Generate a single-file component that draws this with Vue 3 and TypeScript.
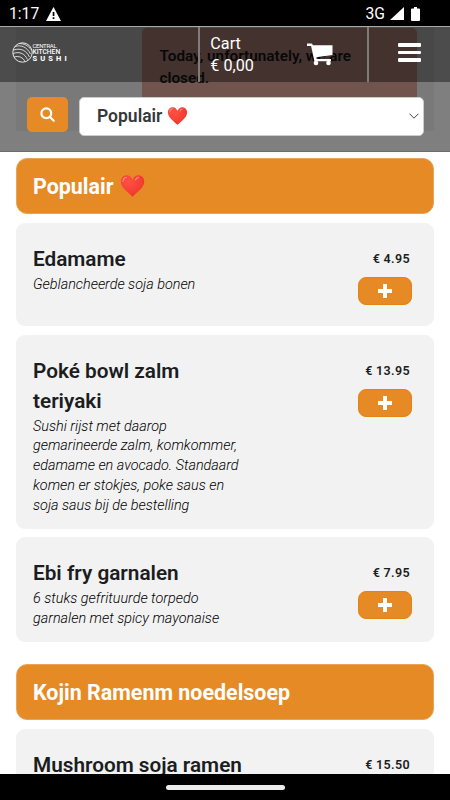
<script setup lang="ts">
interface Dish {
  name: string
  description: string[]
  price: string
}

interface Category {
  title: string
  favourite: boolean
  dishes: Dish[]
}

const categories: Category[] = [
  {
    title: 'Populair',
    favourite: true,
    dishes: [
      { name: 'Edamame', description: ['Geblancheerde soja bonen'], price: '€ 4.95' },
      {
        name: 'Poké bowl zalm teriyaki',
        description: [
          'Sushi rijst met daarop',
          'gemarineerde zalm, komkommer,',
          'edamame en avocado. Standaard',
          'komen er stokjes, poke saus en',
          'soja saus bij de bestelling',
        ],
        price: '€ 13.95',
      },
      {
        name: 'Ebi fry garnalen',
        description: ['6 stuks gefrituurde torpedo', 'garnalen met spicy mayonaise'],
        price: '€ 7.95',
      },
    ],
  },
  {
    title: 'Kojin Ramenm noedelsoep',
    favourite: false,
    dishes: [{ name: 'Mushroom soja ramen', description: [], price: '€ 15.50' }],
  },
]
</script>

<template>
  <div class="phone">
    <svg class="defs" width="0" height="0" aria-hidden="true">
      <defs>
        <radialGradient id="heart-fill" cx=".35" cy=".3" r=".85">
          <stop offset="0" stop-color="#ff5145" />
          <stop offset=".65" stop-color="#f53d32" />
          <stop offset="1" stop-color="#d9281f" />
        </radialGradient>
        <symbol id="heart" viewBox="0 0 24 22">
          <path d="M12 4.6C10.4 1.500 8.500.300 6.300.300 2.800.300.300 3 .300 6.600c0 6 6.600 10.400 11.700 15.100 5.100-4.700 11.700-9.100 11.700-15.100C23.700 3 21.200.300 17.700.300 15.500.300 13.600 1.500 12 4.600z" fill="url(#heart-fill)" />
          <path d="M2.500 6.200C2.700 4 4 2.500 5.900 2.300M15 4.800c.7-1.300 1.700-2.200 3-2.300" fill="none" stroke="#ff8a7c" stroke-width="1.300" stroke-linecap="round" />
        </symbol>
      </defs>
    </svg>

    <div class="status-bar">
      <span class="clock">1:17</span>
      <svg class="warning" width="15" height="14" viewBox="0 0 15 14">
        <path d="M7.500 0L15 14H0z" fill="#fff" />
        <path d="M6.700 5h1.700v4H6.700zM6.700 10.200h1.700v1.700H6.700z" fill="#000" />
      </svg>
      <span class="network">3G</span>
      <svg class="signal" width="14" height="13" viewBox="0 0 14 13"><path d="M14 0v13H0z" fill="#fff" /></svg>
      <svg class="battery" width="9" height="14" viewBox="0 0 9 14">
        <path d="M3 0h3v1.500h2q1 0 1 1V13q0 1-1 1H1q-1 0-1-1V2.500q0-1 1-1h2z" fill="#fff" />
      </svg>
    </div>

    <main class="screen">
      <section class="notice-card">
        <div class="notice">Today, unfortunately, we are closed.</div>
      </section>

      <section v-for="category in categories" :key="category.title" class="category">
        <h2 class="category-title">
          {{ category.title }}
          <svg v-if="category.favourite" class="title-heart" width="25" height="22"><use href="#heart" /></svg>
        </h2>
        <article v-for="dish in category.dishes" :key="dish.name" class="dish">
          <div class="dish-text">
            <h3>{{ dish.name }}</h3>
            <p><span v-for="line in dish.description" :key="line">{{ line }}</span></p>
          </div>
          <div class="dish-buy">
            <span class="price">{{ dish.price }}</span>
            <button class="add" aria-label="+">
              <svg width="14" height="14" viewBox="0 0 14 14"><path d="M5 0h4v5h5v4H9v5H5V9H0V5h5z" fill="#fff" /></svg>
            </button>
          </div>
        </article>
      </section>

      <header class="overlay">
        <nav class="top-nav">
          <div class="brand">
            <svg width="21" height="21" viewBox="0 0 21 21" fill="none" stroke="#e8e8e8">
              <circle cx="10.500" cy="10.500" r="9.700" stroke-width="1" />
              <path d="M3 4.500C9 2.500 15 5 18.500 12M1.500 8c8-2.500 13 1 16 7M1 11.500c7-2.500 12 .5 14.500 6M2 15c5-1.500 9 .5 11 4.500M7 1.500c5 0 9 2 12.500 6.500" stroke-width=".9" />
            </svg>
            <div class="brand-name">
              <span>CENTRAL</span>
              <span class="kitchen">KITCHEN</span>
              <span class="sushi">SUSHI</span>
            </div>
          </div>
          <div class="cart">
            <div class="cart-total"><span>Cart</span><span>€ 0,00</span></div>
            <svg class="cart-icon" width="26" height="23" viewBox="0 0 26 23">
              <path d="M0 .500h4.500q1 0 1.300 1.800H25.500V12L9.300 14.200l.4 1.800H24v2.200H7.400L4.100 3H0z" fill="#fff" />
              <circle cx="9" cy="20" r="2.300" fill="#fff" /><circle cx="21.500" cy="20" r="2.300" fill="#fff" />
            </svg>
          </div>
          <div class="menu"><i></i><i></i><i></i></div>
        </nav>
        <div class="filter">
          <button class="search" aria-label="Search">
            <svg width="15" height="15" viewBox="0 0 15 15" fill="none" stroke="#fff" stroke-width="2.200" stroke-linecap="round">
              <circle cx="6.300" cy="6.300" r="4.900" /><path d="M10 10l3.700 3.700" />
            </svg>
          </button>
          <div class="select">
            <span>Populair</span>
            <svg width="21" height="18"><use href="#heart" /></svg>
            <svg class="chevron" width="10" height="6" viewBox="0 0 10 6"><path d="M.500.700L5 5.200 9.500.700" fill="none" stroke="#444" /></svg>
          </div>
        </div>
      </header>
    </main>

    <div class="gesture-bar"><i></i></div>
  </div>
</template>

<style>
body {
  margin: 0;
  overflow: hidden;
}
</style>

<style scoped>
.phone {
  width: 450px;
  height: 800px;
  display: flex;
  flex-direction: column;
  overflow: hidden;
  background: #fff;
  color: #1b1d1f;
  font-family: Roboto, "Liberation Sans", sans-serif;
}
.phone * {
  box-sizing: border-box;
}
.defs {
  position: absolute;
}
svg {
  display: block;
  flex: none;
}
.status-bar {
  flex: none;
  height: 26px;
  display: flex;
  align-items: center;
  padding: 1px 30px 0 9px;
  background: #000;
  color: #fff;
  font-size: 15.700px;
}
.clock {
  width: 37px;
}
.network {
  margin-left: auto;
}
.signal {
  margin-left: 5px;
}
.battery {
  margin-left: 7px;
}
.screen {
  position: relative;
  flex: 1;
  min-height: 0;
  overflow: hidden;
}
.notice-card {
  height: 105px;
  margin: 0 16px 27.300px;
  padding: 2px 17px 0 126px;
  background: #f3f3f3;
}
.notice {
  height: 85px;
  padding: 17px 17px 0 17.500px;
  border-radius: 5px;
  background: #e1a89b;
  font-size: 15.300px;
  line-height: 22px;
  font-weight: 600;
}
.category {
  padding: 0 16px;
  margin-bottom: 22px;
}
.category-title {
  height: 56px;
  margin: 0 0 8.700px;
  padding: 0 16px;
  display: flex;
  align-items: center;
  gap: 6px;
  border: 1px solid #e7a657;
  border-radius: 11px;
  background: #e58a24;
  color: #fff;
  font-size: 21.450px;
  font-weight: 700;
}
.dish {
  display: flex;
  justify-content: space-between;
  min-height: 103.500px;
  margin-bottom: 8.500px;
  padding: 21px 22px 13.400px 17px;
  border-radius: 9px;
  background: #f2f2f2;
}
.dish-text {
  width: 215px;
}
.dish h3 {
  margin: 0;
  font-size: 20.750px;
  line-height: 30px;
  font-weight: 600;
}
.dish p {
  margin: .6px 0 0;
  font-size: 14.400px;
  line-height: 19.800px;
  font-style: italic;
  font-weight: 300;
  color: #000;
}
.dish p span {
  display: block;
  white-space: nowrap;
}
.dish-buy {
  display: flex;
  flex-direction: column;
  align-items: flex-end;
}
.price {
  margin-right: 2px;
  font-size: 12.500px;
  line-height: 30px;
  font-weight: 600;
  letter-spacing: .35px;
}
.add {
  width: 54.500px;
  height: 28px;
  margin-top: 3px;
  padding: 0;
  display: flex;
  align-items: center;
  justify-content: center;
  border: 1px solid #e48413;
  border-radius: 8px;
  background: #e58a24;
}
.overlay {
  position: absolute;
  inset: 0 0 auto;
  height: 126px;
  background: rgba(0, 0, 0, .5);
  border-bottom: 1px solid rgba(0, 0, 0, .15);
}
.top-nav {
  height: 56px;
  display: flex;
  background: rgba(0, 0, 0, .4);
  border-top: 1px solid #aaa;
  color: #fff;
}
.brand {
  width: 198px;
  display: flex;
  padding: 15px 0 0 11.500px;
}
.brand-name {
  padding-top: 1px;
  display: flex;
  flex-direction: column;
  font-size: 6px;
  line-height: 6px;
  letter-spacing: -.3px;
}
.brand-name .kitchen {
  font-size: 6.700px;
  font-weight: 500;
  letter-spacing: 0;
}
.brand-name .sushi {
  font-size: 7.500px;
  line-height: 7px;
  font-weight: 800;
  letter-spacing: 3.100px;
}
.cart {
  width: 171px;
  display: flex;
  border: solid #817b79;
  border-width: 0 2px;
}
.cart-total {
  width: 107px;
  padding: 5.500px 0 0 10.300px;
  display: flex;
  flex-direction: column;
  font-size: 16.200px;
  line-height: 22px;
}
.cart-icon {
  margin-top: 16px;
}
.menu {
  padding: 16px 0 0 29px;
  display: flex;
  flex-direction: column;
  gap: 4px;
}
.menu i {
  width: 23px;
  height: 3.700px;
  border-radius: 1px;
  background: #fff;
}
.filter {
  display: flex;
  gap: 11px;
  padding: 15px 26px 0 27px;
}
.search {
  width: 41px;
  height: 35px;
  padding: 0;
  display: flex;
  align-items: center;
  justify-content: center;
  border: 0;
  border-radius: 5px;
  background: #e58a24;
}
.select {
  flex: 1;
  height: 39px;
  display: flex;
  align-items: center;
  gap: 5px;
  padding: 0 4px 2px 17px;
  border: 1px solid #ccc;
  border-radius: 5px;
  background: #fff;
  color: #35383b;
  font-size: 17.500px;
  font-weight: 600;
}
.chevron {
  margin-left: auto;
}
.gesture-bar {
  flex: none;
  height: 26px;
  display: flex;
  align-items: center;
  justify-content: center;
  background: #000;
}
.gesture-bar i {
  width: 119px;
  height: 5px;
  border-radius: 3px;
  background: #ececec;
}
</style>
